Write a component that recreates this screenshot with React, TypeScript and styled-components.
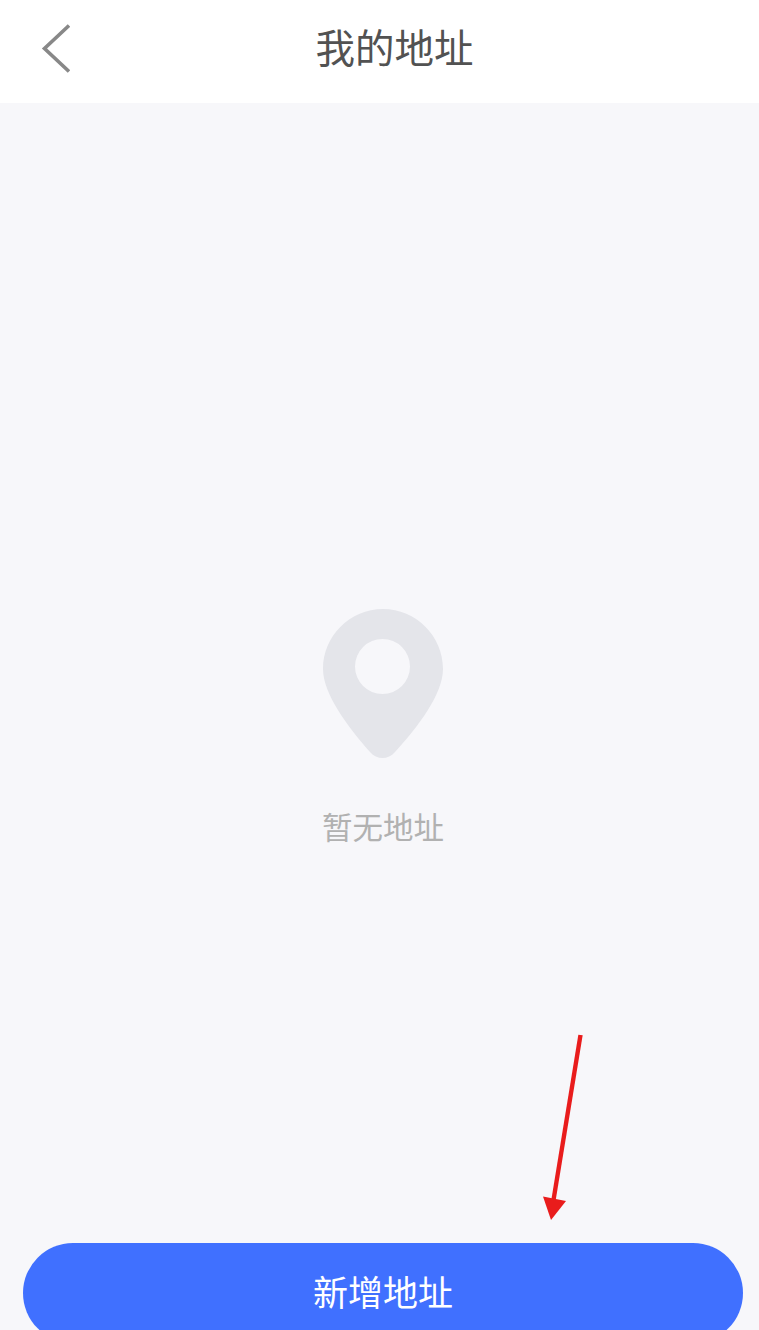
import React from 'react';
import styled, { createGlobalStyle } from 'styled-components';

const CJK = '"Noto Sans CJK SC", "Noto Sans", sans-serif';

const Global = createGlobalStyle`
  html, body { margin: 0; padding: 0; background: #f7f7fa; }
  body { font-family: ${CJK}; overflow: hidden; }
`;

const Page = styled.div`
  position: relative;
  width: 759px;
  height: 1330px;
  overflow: hidden;
  display: flex;
  flex-direction: column;
  background: #f7f7fa;
`;

const Header = styled.header`
  flex: 0 0 103px;
  background: #ffffff;
  display: grid;
  grid-template-columns: 1fr auto 1fr;
  align-items: center;
  padding-left: 30px;
`;

const BackButton = styled.button`
  justify-self: start;
  display: flex;
  width: 40px;
  height: 60px;
  padding: 0;
  margin: 0;
  border: 0;
  background: none;
`;

const Title = styled.h1`
  margin: -12px 0 0 0;
  font-size: 39.5px;
  line-height: 56px;
  font-weight: 400;
  color: #525252;
`;

const EmptyState = styled.main`
  flex: 0 0 1140px;
  display: flex;
  flex-direction: column;
  align-items: center;
  padding: 506px 16px 0 23px;
  box-sizing: border-box;
`;

const EmptyText = styled.p`
  margin: 46px 0 0 0;
  font-size: 30.5px;
  line-height: 44px;
  color: #b1b1b1;
`;

const AddButton = styled.button`
  flex: 0 0 100px;
  margin: 0 16px 0 23px;
  border: 0;
  border-radius: 50px;
  background: #4070ff;
  color: #ffffff;
  font-family: ${CJK};
  font-size: 35px;
  line-height: 50px;
  padding: 0 0 4px 0;
`;

const Annotation = styled.svg`
  position: absolute;
  left: 530px;
  top: 1025px;
`;

export default function App() {
  return (
    <Page>
      <Global />
      <Header>
        <BackButton aria-label="返回">
          <svg width="40" height="60" viewBox="0 0 40 60">
            <path d="M39 3.5 L14.5 26.5 L39 49.5" fill="none" stroke="#888888" strokeWidth="3.6" />
          </svg>
        </BackButton>
        <Title>我的地址</Title>
      </Header>
      <EmptyState>
        <svg width="120" height="149" viewBox="0 0 120 149">
          <path
            fillRule="evenodd"
            fill="#e4e5ea"
            d="M60 0C93 0 120 27 120 60C120 85 95 118 72 143C65 151 54 151 47 143C25 118 0 85 0 60C0 27 27 0 60 0ZM59.5 30A27.5 27.5 0 1 0 59.5 85A27.5 27.5 0 1 0 59.5 30Z"
          />
        </svg>
        <EmptyText>暂无地址</EmptyText>
      </EmptyState>
      <AddButton>新增地址</AddButton>
      <Annotation width="60" height="200" viewBox="530 1025 60 200">
        <path d="M580.5 1035 L553.5 1200" stroke="#e91c1c" strokeWidth="4.4" fill="none" />
        <path d="M543 1196.5 L566 1201 L551 1220 Z" fill="#e91c1c" />
      </Annotation>
    </Page>
  );
}
